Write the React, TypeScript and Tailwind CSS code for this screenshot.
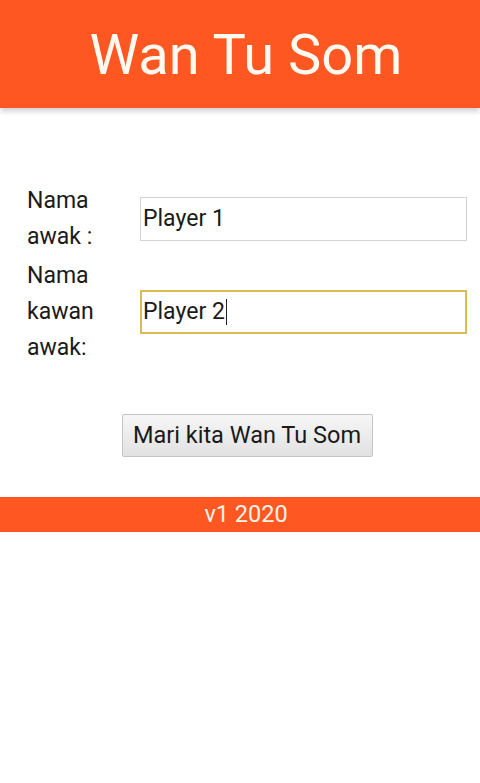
export default function App() {
  return (
    <div className="min-h-[783px] bg-white font-['Roboto',sans-serif] text-[#1a1a1a]">
      <header className="h-[108px] bg-[#ff5722] flex items-center justify-center pl-[12px] shadow-[0_3px_6px_rgba(0,0,0,0.2)]">
        <h1 className="text-[56px] leading-none text-[#fffaf0] pt-[1px]">Wan Tu Som</h1>
      </header>

      <main className="pt-[75px] pl-[27px] pr-[13px]">
        <div className="flex items-center h-[72px]">
          <label className="w-[113px] text-[23px] leading-[36px]">
            Nama
            <br />
            awak :
          </label>
          <div className="flex-1 h-[44px] border border-[#d4d4d4] flex items-center pl-[2px] text-[23px]">
            Player 1
          </div>
        </div>
        <div className="flex items-center h-[108px] mt-[3px]">
          <label className="w-[113px] text-[23px] leading-[36px]">
            Nama
            <br />
            kawan
            <br />
            awak:
          </label>
          <div className="flex-1 h-[44px] border-2 border-[#d9bd52] flex items-center pl-[1px] text-[23px]">
            Player 2<span className="inline-block w-[1px] h-[26px] bg-[#222] ml-[1px]" />
          </div>
        </div>

        <div className="flex justify-center mt-[48px]">
          <button className="h-[43px] w-[251px] border border-[#c4c4c4] rounded-[2px] bg-gradient-to-b from-[#f6f6f6] to-[#e2e2e2] text-[23.5px] text-[#1a1a1a]">
            Mari kita Wan Tu Som
          </button>
        </div>
      </main>

      <footer className="mt-[40px] h-[35px] bg-[#ff5722] flex items-center justify-center pl-[12px] text-[23.5px] text-[#fff3e6]">
        v1 2020
      </footer>
    </div>
  );
}
